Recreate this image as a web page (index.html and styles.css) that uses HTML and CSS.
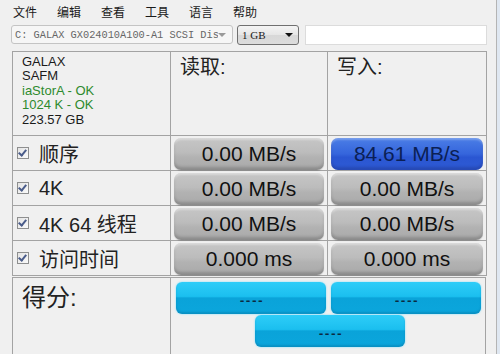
FILE: index.html
```html
<!DOCTYPE html>
<html lang="zh-CN">
<head>
    <meta charset="UTF-8">
    <title>AS SSD Benchmark</title>
    <link rel="stylesheet" href="styles.css">
</head>
<body>
    <div class="window">
        <!-- 菜单 -->
        <div class="menubar">
            <span>文件</span>
            <span>编辑</span>
            <span>查看</span>
            <span>工具</span>
            <span>语言</span>
            <span>帮助</span>
        </div>

        <!-- 工具栏 -->
        <div class="toolbar">
            <div class="combo drive">
                <span class="combo-text">C: GALAX GX024010A100-A1 SCSI Dis</span>
                <span class="combo-arrow grey"></span>
            </div>
            <div class="combo size">
                <span class="combo-text">1 GB</span>
                <span class="combo-arrow"></span>
            </div>
            <div class="textbox"></div>
        </div>

        <!-- 测试结果 -->
        <div class="grid">
            <div class="cell info">
                <div>GALAX</div>
                <div>SAFM</div>
                <div class="ok">iaStorA - OK</div>
                <div class="ok">1024 K - OK</div>
                <div>223.57 GB</div>
            </div>
            <div class="cell head">读取:</div>
            <div class="cell head">写入:</div>

            <div class="cell label"><span class="check"></span>顺序</div>
            <div class="cell"><div class="bar">0.00 MB/s</div></div>
            <div class="cell"><div class="bar active">84.61 MB/s</div></div>

            <div class="cell label"><span class="check"></span>4K</div>
            <div class="cell"><div class="bar">0.00 MB/s</div></div>
            <div class="cell"><div class="bar">0.00 MB/s</div></div>

            <div class="cell label"><span class="check"></span>4K 64 线程</div>
            <div class="cell"><div class="bar">0.00 MB/s</div></div>
            <div class="cell"><div class="bar">0.00 MB/s</div></div>

            <div class="cell label"><span class="check"></span>访问时间</div>
            <div class="cell"><div class="bar">0.000 ms</div></div>
            <div class="cell"><div class="bar">0.000 ms</div></div>
        </div>

        <!-- 得分 -->
        <div class="score">
            <div class="score-label">得分:</div>
            <div class="score-bars">
                <div class="score-row">
                    <div class="sbar">----</div>
                    <div class="sbar">----</div>
                </div>
                <div class="score-row center">
                    <div class="sbar">----</div>
                </div>
            </div>
        </div>
    </div>
</body>
</html>
```

FILE: styles.css
```css
:root {
    --bg: #f0f0f0;
    --line: #a3a3a3;
    --text: #1a1a1a;
}
html, body {
    margin: 0;
    height: 100%;
    overflow: hidden;
}
body {
    font-family: 'Liberation Sans', 'Noto Sans CJK SC', sans-serif;
    background: #dfe7f1;
    color: var(--text);
}
.window {
    width: 496px;
    height: 100%;
    background: var(--bg);
    border-right: 1px solid #b4b4b4;
}
.menubar {
    display: flex;
    gap: 20px;
    height: 22px;
    padding-left: 13px;
    align-items: center;
    font-size: 12px;
}
.toolbar {
    display: flex;
    align-items: center;
    height: 21px;
    margin: 2px 0 0 11px;
}
.combo {
    display: flex;
    align-items: center;
    height: 18px;
    border: 1px solid #b0b0b0;
    border-radius: 3px;
    box-sizing: border-box;
}
.drive {
    width: 222px;
    height: 19px;
    background: #f6f6f6;
    border-color: #c4c4c4;
    padding-left: 3px;
}
.drive .combo-text {
    font-family: 'Liberation Mono', monospace;
    font-size: 10.3px;
    color: #666;
    flex: 1;
    white-space: nowrap;
    overflow: hidden;
}
.size {
    width: 62px;
    height: 20px;
    margin-left: 4px;
    padding-left: 4px;
    border-color: #707070;
    background: linear-gradient(#f4f4f4, #e6e6e6 50%, #d8d8d8 51%, #dcdcdc);
}
.size .combo-text {
    font-family: 'Liberation Serif', serif;
    font-size: 11px;
    flex: 1;
}
.combo-arrow {
    width: 0;
    height: 0;
    border-left: 4px solid transparent;
    border-right: 4px solid transparent;
    border-top: 4px solid #111;
    margin-right: 5px;
}
.combo-arrow.grey {
    border-top-color: #9a9a9a;
    margin-right: 6px;
}
.textbox {
    width: 182px;
    height: 20px;
    margin-left: 6px;
    background: #fff;
    border: 1px solid #dcdcdc;
    box-sizing: border-box;
}
.grid {
    display: grid;
    grid-template-columns: 158px 157px 159px;
    grid-template-rows: 84px 35px 35px 35px 35px;
    margin: 6px 0 0 12px;
    width: 474px;
    border-top: 1px solid var(--line);
    border-left: 1px solid var(--line);
}
.cell {
    border-right: 1px solid var(--line);
    border-bottom: 1px solid var(--line);
    padding: 1px 3px;
    box-sizing: border-box;
}
.info {
    padding: 3px 0 0 9px;
    font-size: 13px;
    line-height: 14.4px;
}
.ok {
    color: #2d8a2d;
}
.head {
    padding: 2px 0 0 9px;
    font-size: 20px;
    line-height: 26px;
    color: #222;
}
.label {
    display: flex;
    align-items: center;
    padding-left: 4px;
    font-size: 20px;
    color: #222;
}
.check {
    width: 10px;
    height: 10px;
    margin-right: 10px;
    border: 1px solid #8e8f8f;
    background: linear-gradient(135deg, #e4e4e4, #fafafa);
    position: relative;
}
.check::after {
    content: '';
    position: absolute;
    left: 2px;
    top: 0px;
    width: 3px;
    height: 6px;
    border-right: 2px solid #4a5c8a;
    border-bottom: 2px solid #4a5c8a;
    transform: rotate(40deg);
}
.bar {
    height: 32px;
    margin: 1px 0 0 0;
    border-radius: 7px;
    display: flex;
    align-items: center;
    justify-content: center;
    font-size: 21px;
    color: #111;
    background: linear-gradient(#c6c6c6, #bcbcbc 45%, #b2b2b2 60%, #a9a9a9);
    box-shadow: inset 0 -3px 3px rgba(0,0,0,0.18), inset 0 2px 2px rgba(255,255,255,0.35), 0 1px 1px rgba(0,0,0,0.15);
}
.bar.active {
    background: linear-gradient(#4b7ee6, #3565dc 50%, #2a56d2 60%, #2f5bd4);
    color: #0b1f55;
    box-shadow: inset 0 -3px 3px rgba(0,0,60,0.2), inset 0 2px 2px rgba(255,255,255,0.25);
}
.score {
    display: flex;
    margin: 1px 0 0 12px;
    width: 474px;
    height: 90px;
    border-top: 1px solid var(--line);
    border-left: 1px solid var(--line);
    border-right: 1px solid var(--line);
    box-sizing: border-box;
}
.score-label {
    width: 158px;
    border-right: 1px solid var(--line);
    padding: 5px 0 0 9px;
    box-sizing: border-box;
    font-size: 24px;
    line-height: 30px;
    color: #222;
}
.score-bars {
    flex: 1;
    padding: 4px 0 0 5px;
    display: flex;
    flex-direction: column;
    gap: 1px;
}
.score-row {
    display: flex;
    gap: 5px;
}
.score-row.center {
    padding-left: 79px;
}
.sbar {
    width: 150px;
    height: 32px;
    border-radius: 6px;
    display: flex;
    justify-content: center;
    align-items: center;
    padding-top: 5px;
    box-sizing: border-box;
    font-family: 'DejaVu Sans Mono', monospace;
    font-size: 11px;
    font-weight: bold;
    letter-spacing: -0.5px;
    color: #0b2a40;
    background: linear-gradient(#2ecdf8, #1bbfef 45%, #0aa3d9 50%, #0ba6dc);
    box-shadow: 0 0 2px #6fdcff, inset 0 -2px 2px rgba(0,60,100,0.2);
}
```
